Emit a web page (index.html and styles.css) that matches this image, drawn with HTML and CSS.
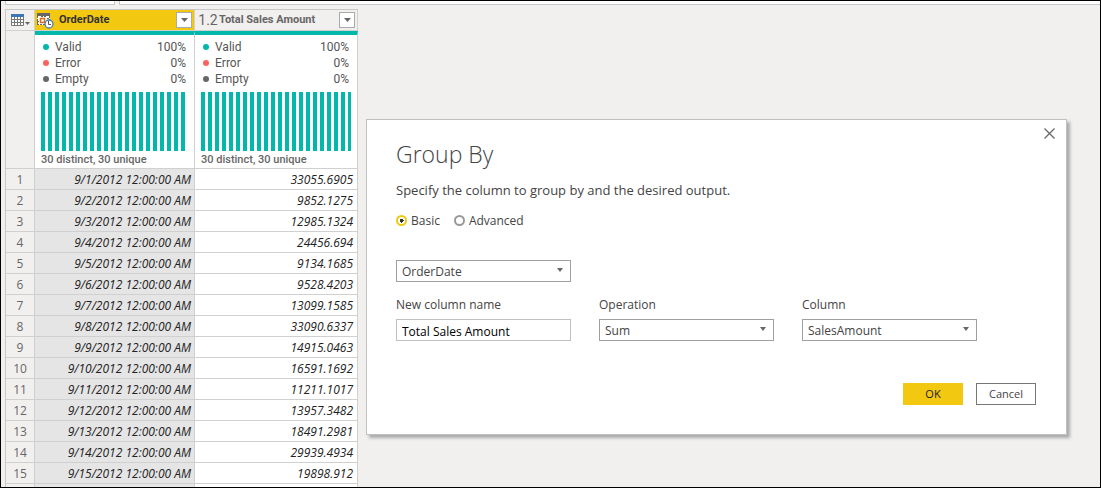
FILE: index.html
```html
<!DOCTYPE html>
<html lang="en">
<head>
<meta charset="utf-8">
<title>Group By</title>
<link rel="stylesheet" href="styles.css">
</head>
<body>
<main class="app">
  <div class="toolbar"><div class="toolbar-box"></div><div class="toolbar-box toolbar-formula"></div></div>
  <table class="preview">
    <colgroup><col class="col-index"><col class="col-date"><col class="col-amount"></colgroup>
    <thead>
      <tr class="head-row">
        <th class="corner">
          <button class="corner-button" aria-label="Table options">
            <svg width="20" height="14" viewBox="0 0 20 14" aria-hidden="true">
              <path fill="#fff" stroke="#777" d="M.5 1.5h12v11H.5z"/>
              <path fill="#3b78b5" d="M0 1h13v3H0z"/>
              <path fill="none" stroke="#777" d="M0 6.5h13M0 9.5h13M3.5 4v9M6.5 4v9M9.5 4v9"/>
              <path fill="#666" d="M14 9h5l-2.500 3z"/>
            </svg>
          </button>
        </th>
        <th class="selected">
          <div class="head">
            <svg class="type-icon" width="17" height="17" viewBox="0 0 17 17" aria-hidden="true">
              <path fill="#fff" d="M0 1h13v12H0z"/>
              <path fill="#666" d="M0 1h13v3H0z"/>
              <path fill="none" stroke="#666" stroke-dasharray="2 1" d="M.5 4v9M12.500 4v4M0 12.500h8M0 9.500h2M10 6.500h2M4 4.500h5"/>
              <path fill="#fff" stroke="#e06a1b" stroke-width="1.500" d="M3.500 6.500h4v4h-4z"/>
              <circle cx="12" cy="12" r="4" fill="#fff" stroke="#4a7cab" stroke-width="1.300"/>
              <path fill="none" stroke="#555" d="M11.500 9v3.500h2.500"/>
            </svg>
            <span class="head-name">OrderDate</span>
            <button class="filter" aria-label="Filter OrderDate"><svg width="7" height="4" viewBox="0 0 7 4"><path fill="#666" d="M0 0h7L3.500 4z"/></svg></button>
          </div>
        </th>
        <th>
          <div class="head">
            <span class="type-number">1.2</span>
            <span class="head-name">Total Sales Amount</span>
            <button class="filter" aria-label="Filter Total Sales Amount"><svg width="7" height="4" viewBox="0 0 7 4"><path fill="#666" d="M0 0h7L3.500 4z"/></svg></button>
          </div>
        </th>
      </tr>
      <tr class="profile-row">
        <td class="index"></td>
        <td class="profile">
          <ul class="quality">
            <li class="valid"><span>Valid</span><span>100%</span></li>
            <li class="error"><span>Error</span><span>0%</span></li>
            <li class="empty"><span>Empty</span><span>0%</span></li>
          </ul>
          <div class="bars"></div>
          <p class="distinct">30 distinct, 30 unique</p>
        </td>
        <td class="profile">
          <ul class="quality">
            <li class="valid"><span>Valid</span><span>100%</span></li>
            <li class="error"><span>Error</span><span>0%</span></li>
            <li class="empty"><span>Empty</span><span>0%</span></li>
          </ul>
          <div class="bars"></div>
          <p class="distinct">30 distinct, 30 unique</p>
        </td>
      </tr>
    </thead>
    <tbody>
      <tr><td class="index">1</td><td class="date">9/1/2012 12:00:00 AM</td><td>33055.6905</td></tr>
      <tr><td class="index">2</td><td class="date">9/2/2012 12:00:00 AM</td><td>9852.1275</td></tr>
      <tr><td class="index">3</td><td class="date">9/3/2012 12:00:00 AM</td><td>12985.1324</td></tr>
      <tr><td class="index">4</td><td class="date">9/4/2012 12:00:00 AM</td><td>24456.694</td></tr>
      <tr><td class="index">5</td><td class="date">9/5/2012 12:00:00 AM</td><td>9134.1685</td></tr>
      <tr><td class="index">6</td><td class="date">9/6/2012 12:00:00 AM</td><td>9528.4203</td></tr>
      <tr><td class="index">7</td><td class="date">9/7/2012 12:00:00 AM</td><td>13099.1585</td></tr>
      <tr><td class="index">8</td><td class="date">9/8/2012 12:00:00 AM</td><td>33090.6337</td></tr>
      <tr><td class="index">9</td><td class="date">9/9/2012 12:00:00 AM</td><td>14915.0463</td></tr>
      <tr><td class="index">10</td><td class="date">9/10/2012 12:00:00 AM</td><td>16591.1692</td></tr>
      <tr><td class="index">11</td><td class="date">9/11/2012 12:00:00 AM</td><td>11211.1017</td></tr>
      <tr><td class="index">12</td><td class="date">9/12/2012 12:00:00 AM</td><td>13957.3482</td></tr>
      <tr><td class="index">13</td><td class="date">9/13/2012 12:00:00 AM</td><td>18491.2981</td></tr>
      <tr><td class="index">14</td><td class="date">9/14/2012 12:00:00 AM</td><td>29939.4934</td></tr>
      <tr><td class="index">15</td><td class="date">9/15/2012 12:00:00 AM</td><td>19898.912</td></tr>
      <tr><td class="index"></td><td class="date"></td><td></td></tr>
    </tbody>
  </table>

  <form class="dialog" role="dialog" aria-labelledby="dialog-title">
    <button type="button" class="close" aria-label="Close"><svg width="11" height="11" viewBox="0 0 11 11"><path fill="none" stroke="#666" stroke-width="1.300" d="M.5.5l10 10M10.500.5l-10 10"/></svg></button>
    <h1 class="title" id="dialog-title">Group By</h1>
    <p class="hint">Specify the column to group by and the desired output.</p>
    <div class="modes">
      <label class="mode"><input type="radio" name="mode" checked><span>Basic</span></label>
      <label class="mode"><input type="radio" name="mode"><span>Advanced</span></label>
    </div>
    <div class="fields group-field">
      <div class="select"><select aria-label="Group by column"><option>OrderDate</option></select><svg width="6" height="4" viewBox="0 0 6 4"><path fill="#666" d="M0 0h6L3 4z"/></svg></div>
    </div>
    <div class="fields">
      <div class="field"><label for="name">New column name</label><input class="text" id="name" type="text" value="Total Sales Amount"></div>
      <div class="field"><label for="operation">Operation</label><div class="select"><select id="operation"><option>Sum</option></select><svg width="6" height="4" viewBox="0 0 6 4"><path fill="#666" d="M0 0h6L3 4z"/></svg></div></div>
      <div class="field"><label for="column">Column</label><div class="select"><select id="column"><option>SalesAmount</option></select><svg width="6" height="4" viewBox="0 0 6 4"><path fill="#666" d="M0 0h6L3 4z"/></svg></div></div>
    </div>
    <div class="actions"><button type="button" class="ok">OK</button><button type="button" class="cancel">Cancel</button></div>
  </form>
</main>
</body>
</html>
```
FILE: styles.css
```css
* { box-sizing: border-box; }
body { margin: 0; font: 12px/16px "Open Sans", "Noto Sans", sans-serif; color: #444; }
button, input, select { font: inherit; color: inherit; margin: 0; }
p, h1, ul { margin: 0; padding: 0; }
.app { position: relative; height: 100vh; border: 1px solid #000; background: #f2f0ef; overflow: hidden; padding-left: 4px; }
.toolbar { display: flex; gap: 4px; height: 4px; margin-bottom: 4px; }
.toolbar-box { width: 110px; background: #fff; border: 1px solid #c8c8c8; border-top: 0; }
.toolbar-formula { flex: 1; border-right: 0; }

.preview { width: 353px; table-layout: fixed; border-collapse: separate; border-spacing: 0; border-left: 1px solid #c8c8c8; border-top: 1px solid #c8c8c8; }
.col-index { width: 29px; }
.col-date { width: 160px; }
.col-amount { width: 163px; }
.preview th, .preview td { padding: 0; border-right: 1px solid #d0d0d0; border-bottom: 1px solid #d0d0d0; }
.preview tbody td { height: 21px; padding: 2px 4px 0; line-height: 18px; background: #fff; color: #222; font-style: italic; text-align: right; }
.preview tbody .date { padding-right: 3px; background: #e5e5e5; }
.preview tbody .index { background: #f2f0ef; color: #666; font-style: normal; text-align: center; }
.head-row th { height: 21px; }
.preview .selected { background: #f2c811; color: #333; }
.corner-button { display: flex; width: 100%; padding: 0 0 0 5px; border: 0; background: none; }
.head { display: flex; align-items: center; height: 20px; padding: 0 2px; color: #666; font-family: Roboto, sans-serif; font-size: 11px; font-weight: 700; }
.selected .head { color: #333; }
.type-icon { margin-right: 5px; }
.type-number { width: 22px; font-size: 14px; font-weight: 400; }
.filter { display: flex; align-items: center; justify-content: center; width: 16px; height: 16px; margin-left: auto; padding: 0; border: 1px solid #aaa; background: #fff; }

.profile { background: #fff; font-family: Roboto, sans-serif; color: #555; vertical-align: top; }
.preview .profile { border-top: 4px solid #01b8aa; }
.quality { padding: 4px 8px 5px; list-style: none; }
.quality li { display: flex; align-items: center; }
.quality li::before { content: ""; width: 6px; height: 6px; margin-right: 6px; border-radius: 50%; background: #01b8aa; }
.quality .error::before { background: #fd625e; }
.quality .empty::before { background: #666; }
.quality span:last-child { margin-left: auto; }
.bars { height: 59px; margin: 0 6px; background: repeating-linear-gradient(to right, #01b8aa 0 4px, #fff 4px 7px); }
.distinct { padding: 1px 6px 0; color: #666; font-size: 11px; font-weight: 500; }

.dialog { position: absolute; top: 118px; left: 365px; right: 33px; padding: 20px 30px 29px 29px; border: 1px solid #c0c0c0; background: #fff; box-shadow: 3px 3px 3px #aaa; }
.close { position: absolute; top: 8px; right: 11px; display: flex; padding: 0; border: 0; background: none; }
.title { font-size: 23px; line-height: 28px; font-weight: 300; }
.hint { margin-top: 13px; font-size: 13px; line-height: 18px; }
.modes { display: flex; gap: 14px; margin-top: 13px; }
.mode { display: flex; align-items: center; gap: 4px; }
.mode span { padding-top: 1px; }
.mode input { appearance: none; width: 11px; height: 11px; border: 2px solid #999; border-radius: 50%; background: #fff; }
.mode input:checked { border-color: #f2c811; background: radial-gradient(circle, #333 0 2px, #fff 2px); }
.fields { display: grid; grid-template-columns: 175px 175px 175px; gap: 28px; }
.group-field { margin: 31px 0 15px; }
.field label { display: block; margin-bottom: 6px; }
.select { position: relative; }
.select svg { position: absolute; right: 8px; top: 8px; pointer-events: none; }
.select select, .text { appearance: none; display: block; width: 100%; height: 22px; padding: 2px 5px 0; border: 1px solid #a0a0a0; border-radius: 0; background: #fff; }
.text { border-color: #c0c0c0; color: #000; }
.actions { display: flex; justify-content: flex-end; gap: 13px; margin-top: 42px; }
.ok, .cancel { width: 60px; height: 22px; padding: 0; border: 1px solid #777; background: #fff; font-size: 11px; }
.ok { border-color: #f2c811; background: #f2c811; color: #222; }
```
